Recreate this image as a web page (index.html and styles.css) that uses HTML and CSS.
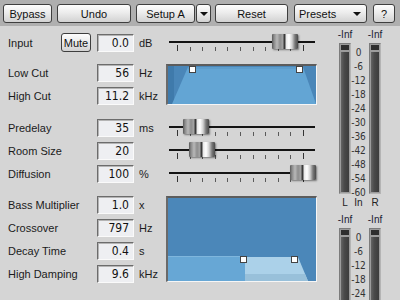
FILE: index.html
```html
<!DOCTYPE html>
<html>
<head>
    <title>Reverb</title>
    <link rel="stylesheet" href="styles.css">
</head>
<body>
    <div class="toolbar">
        <button class="btn btn-bypass">Bypass</button>
        <button class="btn btn-undo">Undo</button>
        <button class="btn btn-setup">Setup A</button>
        <button class="btn btn-arrow"><span class="arrow"></span></button>
        <button class="btn btn-reset">Reset</button>
        <button class="btn btn-presets"><span>Presets</span><span class="arrow"></span></button>
        <button class="btn btn-help">?</button>
    </div>

    <div class="main">
        <div class="controls">
            <div class="group group-input">
                <div class="label">Input <button class="btn btn-mute">Mute</button></div>
                <div class="value">0.0</div>
                <div class="unit">dB</div>
                <div class="slider">
                    <div class="track"></div>
                    <div class="ticks"><span></span><span></span><span></span><span></span><span></span><span></span><span></span><span></span><span></span><span></span><span></span></div>
                    <div class="thumb" style="left: 106px"></div>
                </div>
            </div>

            <div class="group group-filter">
                <div class="label">Low Cut</div>
                <div class="value">56</div>
                <div class="unit">Hz</div>
                <div class="label">High Cut</div>
                <div class="value">11.2</div>
                <div class="unit">kHz</div>
                <div class="graph graph-cut">
                    <svg width="148" height="38" viewBox="0 0 148 38">
                        <rect x="0" y="0" width="148" height="38" fill="#4a86b8"/>
                        <rect x="0" y="0" width="6" height="38" fill="#3f7aab"/>
                        <polygon points="4,38 20,1 135,1 148,38" fill="#63a5d4"/>
                        <rect x="20" y="1" width="115" height="2" fill="#5d9dcc"/>
                        <rect x="21.5" y="0.5" width="6" height="6" fill="#fff" stroke="#444"/>
                        <rect x="128.5" y="0.5" width="6" height="6" fill="#fff" stroke="#444"/>
                    </svg>
                </div>
            </div>

            <div class="group group-space">
                <div class="label">Predelay</div>
                <div class="value">35</div>
                <div class="unit">ms</div>
                <div class="slider">
                    <div class="track"></div>
                    <div class="ticks"><span></span><span></span><span></span><span></span><span></span><span></span><span></span><span></span><span></span><span></span><span></span></div>
                    <div class="thumb" style="left: 17px"></div>
                </div>
                <div class="label">Room Size</div>
                <div class="value">20</div>
                <div class="unit"></div>
                <div class="slider">
                    <div class="track"></div>
                    <div class="ticks"><span></span><span></span><span></span><span></span><span></span><span></span><span></span><span></span><span></span><span></span><span></span></div>
                    <div class="thumb" style="left: 23px"></div>
                </div>
                <div class="label">Diffusion</div>
                <div class="value">100</div>
                <div class="unit">%</div>
                <div class="slider">
                    <div class="track"></div>
                    <div class="ticks"><span></span><span></span><span></span><span></span><span></span><span></span><span></span><span></span><span></span><span></span><span></span></div>
                    <div class="thumb" style="left: 124px"></div>
                </div>
            </div>

            <div class="group group-bass">
                <div class="label">Bass Multiplier</div>
                <div class="value">1.0</div>
                <div class="unit">x</div>
                <div class="label">Crossover</div>
                <div class="value">797</div>
                <div class="unit">Hz</div>
                <div class="label">Decay Time</div>
                <div class="value">0.4</div>
                <div class="unit">s</div>
                <div class="label">High Damping</div>
                <div class="value">9.6</div>
                <div class="unit">kHz</div>
                <div class="graph graph-damp">
                    <svg width="148" height="83" viewBox="0 0 148 83">
                        <rect x="0" y="0" width="148" height="83" fill="#4b87b9"/>
                        <rect x="0" y="58" width="77" height="25" fill="#67a7d5"/>
                        <rect x="0" y="58" width="77" height="1" fill="#7fb6dd"/>
                        <polygon points="77,59 130,59 140,83 77,83" fill="#abd1e9"/>
                        <polygon points="77,76 137,76 140,83 77,83" fill="#98c0da"/>
                        <rect x="72.5" y="58.5" width="6" height="6" fill="#fff" stroke="#444"/>
                        <rect x="123.5" y="58.5" width="6" height="6" fill="#fff" stroke="#444"/>
                    </svg>
                </div>
            </div>
        </div>

        <div class="meters">
            <div class="meter-set">
                <div class="meter-head"><span>-Inf</span><span></span><span>-Inf</span></div>
                <div class="meter-body">
                    <div class="meter"><div class="peak"></div><div class="level"></div></div>
                    <div class="scale">
                        <div>0</div><div>-6</div><div>-12</div><div>-18</div><div>-24</div><div>-30</div>
                        <div>-36</div><div>-42</div><div>-48</div><div>-54</div><div>-60</div>
                    </div>
                    <div class="meter"><div class="peak"></div><div class="level"></div></div>
                </div>
                <div class="meter-foot"><span>L</span><span>In</span><span>R</span></div>
            </div>
            <div class="meter-set meter-set-out">
                <div class="meter-head"><span>-Inf</span><span></span><span>-Inf</span></div>
                <div class="meter-body">
                    <div class="meter"><div class="peak"></div><div class="level"></div></div>
                    <div class="scale">
                        <div>0</div><div>-6</div><div>-12</div><div>-18</div><div>-24</div><div>-30</div>
                        <div>-36</div><div>-42</div><div>-48</div><div>-54</div><div>-60</div>
                    </div>
                    <div class="meter"><div class="peak"></div><div class="level"></div></div>
                </div>
            </div>
        </div>
    </div>
</body>
</html>
```

FILE: styles.css
```css
body {
    margin: 0;
    width: 400px;
    height: 300px;
    overflow: hidden;
    background: #d5d5d5;
    font-family: "Liberation Sans", Arial, sans-serif;
    font-size: 11px;
    color: #1b1b1b;
}

/* top toolbar */
.toolbar {
    height: 26px;
    box-sizing: border-box;
    padding: 4px 0 0 3px;
    background: #afafaf;
    display: flex;
    align-items: flex-start;
}
.btn {
    height: 19px;
    box-sizing: border-box;
    padding: 0;
    border: 1px solid #3e3e3e;
    border-radius: 3px;
    background: linear-gradient(#fdfdfd, #ececec 45%, #d2d2d2);
    font-family: inherit;
    font-size: 11px;
    color: #111;
    display: flex;
    align-items: center;
    justify-content: center;
}
.btn-bypass { width: 49px; }
.btn-undo { width: 74px; margin-left: 5px; }
.btn-setup { width: 59px; margin-left: 5px; }
.btn-arrow { width: 15px; margin-left: 1px; }
.btn-reset { width: 73px; margin-left: 4px; }
.btn-presets {
    width: 73px;
    margin-left: 6px;
    justify-content: space-between;
    padding: 0 5px 0 4px;
}
.btn-help { width: 22px; margin-left: 6px; }
.btn-mute { width: 30px; }
.arrow {
    width: 0;
    height: 0;
    border-left: 4px solid transparent;
    border-right: 4px solid transparent;
    border-top: 4px solid #111;
    margin-top: 1px;
}

/* main area */
.main {
    display: flex;
}
.controls {
    width: 317px;
    box-sizing: border-box;
    padding-left: 8px;
}
.group {
    display: grid;
    grid-template-columns: 89px 37px 32px 151px;
    grid-auto-rows: 23px;
}
.group-input { margin-top: 5px; }
.group-filter { margin-top: 7px; }
.group-space { margin-top: 9px; }
.group-bass { margin-top: 8px; }

.label {
    display: flex;
    align-items: center;
    justify-content: space-between;
    padding-right: 6px;
    white-space: nowrap;
}
.value {
    height: 18px;
    align-self: center;
    box-sizing: border-box;
    border: 1px solid;
    border-color: #6c6c6c #fafafa #fafafa #6c6c6c;
    box-shadow: inset 1px 1px 0 #b4b4b4;
    background: #eeeff2;
    text-align: right;
    padding-right: 4px;
    line-height: 16px;
    font-family: "Liberation Sans Narrow", "DejaVu Sans Condensed", "Liberation Sans", sans-serif;
    font-stretch: condensed;
    font-size: 12px;
    color: #111;
}
.unit {
    display: flex;
    align-items: center;
    padding-left: 5px;
}

/* sliders */
.slider {
    position: relative;
}
.track {
    position: absolute;
    left: 3px;
    right: 2px;
    top: 10px;
    height: 2px;
    background: #141414;
}
.ticks {
    position: absolute;
    left: 11px;
    right: 13px;
    top: 14px;
    height: 6px;
    display: flex;
    justify-content: space-between;
    align-items: flex-start;
}
.ticks span {
    width: 1px;
    height: 4px;
    margin-top: 2px;
    background: #5a5a5a;
}
.ticks span:first-child,
.ticks span:last-child {
    height: 6px;
    margin-top: 0;
    background: #333;
}
.thumb {
    position: absolute;
    top: 3px;
    width: 26px;
    height: 15px;
    border-radius: 1px;
    background: linear-gradient(to right,
        #5a5a5a 0, #8a8a8a 2px, #b8b8b8 5px, #8e8e8e 8px, #a6a6a6 11px,
        #3a3a3a 12px, #3a3a3a 13px, #e6e6e6 14px, #ffffff 17px,
        #d2d2d2 20px, #787878 23px, #4a4a4a 26px);
    box-shadow: 1px 1px 2px rgba(0, 0, 0, 0.45);
}

/* graphs */
.graph {
    grid-column: 4;
    border-style: solid;
    border-width: 2px 1px 1px 2px;
    border-color: #5c5c5c #f6f6f6 #f6f6f6 #6a6a6a;
    line-height: 0;
    margin-top: 3px;
    align-self: start;
}
.graph svg {
    display: block;
}
.graph-cut {
    grid-row: 1 / span 2;
    height: 38px;
}
.graph-damp {
    grid-row: 1 / span 4;
    height: 83px;
}

/* level meters */
.meters {
    margin-left: 22px;
    padding-top: 3px;
}
.meter-head,
.meter-foot,
.meter-body {
    display: grid;
    grid-template-columns: 12px 18px 12px;
}
.meter-head,
.meter-foot {
    height: 12px;
    line-height: 12px;
    font-size: 10px;
}
.meter-head {
    margin-bottom: 2px;
    color: #1c2236;
}
.meter-head span,
.meter-foot span {
    display: flex;
    justify-content: center;
    white-space: nowrap;
}
.meter-foot {
    margin-top: 3px;
    color: #222;
}
.meter-foot span:nth-child(2) {
    padding-right: 3px;
}
.meter-set-out {
    margin-top: 5px;
}
.meter {
    width: 12px;
    height: 151px;
    box-sizing: border-box;
    border: 1px solid;
    border-color: #7c7c7c #b4b4b4 #b4b4b4 #7c7c7c;
    background: #9c9c9c;
    padding: 1px;
    display: flex;
    flex-direction: column;
    gap: 2px;
}
.peak {
    height: 5px;
    background: #2e2e2e;
}
.level {
    flex: 1;
    background: linear-gradient(to right, #646464, #4a4a4a 40%, #3c3c3c);
}
.scale {
    height: 151px;
    padding-top: 3px;
    padding-right: 3px;
    box-sizing: border-box;
    font-family: "Liberation Sans Narrow", "DejaVu Sans Condensed", "Liberation Sans", sans-serif;
    font-stretch: condensed;
    font-size: 10px;
    color: #333;
    text-align: center;
}
.scale div {
    height: 14px;
    box-sizing: border-box;
    padding-top: 2px;
    line-height: 10px;
    white-space: nowrap;
}
```
